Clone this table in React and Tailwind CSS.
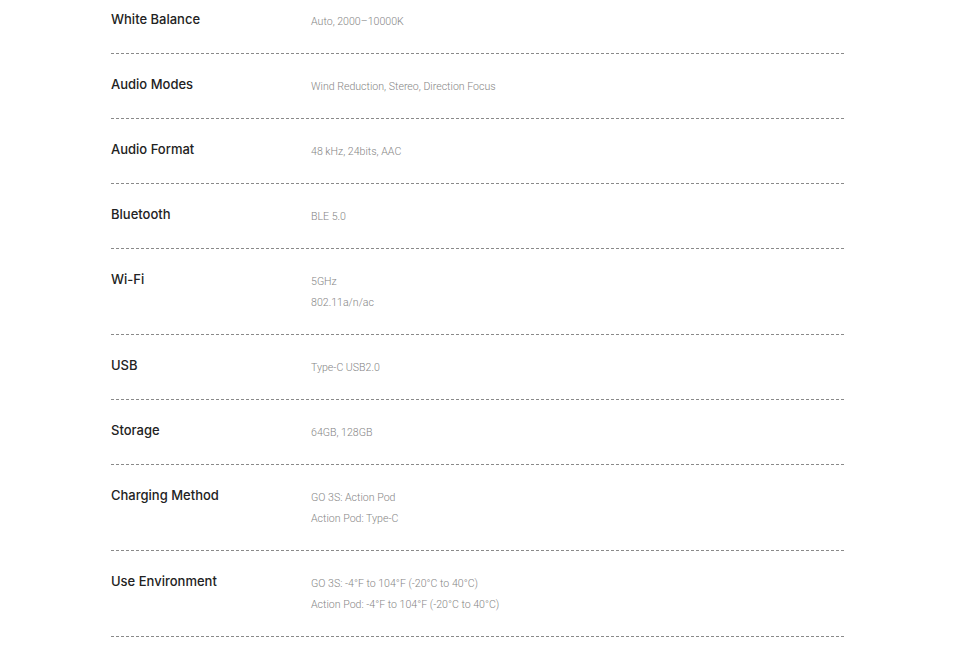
const specs = [
  { label: 'White Balance', values: ['Auto, 2000–10000K'] },
  { label: 'Audio Modes', values: ['Wind Reduction, Stereo, Direction Focus'] },
  { label: 'Audio Format', values: ['48 kHz, 24bits, AAC'] },
  { label: 'Bluetooth', values: ['BLE 5.0'] },
  { label: 'Wi-Fi', values: ['5GHz', '802.11a/n/ac'] },
  { label: 'USB', values: ['Type-C USB2.0'] },
  { label: 'Storage', values: ['64GB, 128GB'] },
  { label: 'Charging Method', values: ['GO 3S: Action Pod', 'Action Pod: Type-C'] },
  { label: 'Use Environment', values: ['GO 3S: -4°F to 104°F (-20°C to 40°C)', 'Action Pod: -4°F to 104°F (-20°C to 40°C)'] },
];

export default function App() {
  return (
    <div className="w-full h-[646px] overflow-hidden bg-white">
      {/* Spec table */}
      <div className="w-[733px] ml-[111px] -mt-[11px]">
        {specs.map((row) => (
          <div
            key={row.label}
            className="flex pt-5 pb-[21px] border-b border-dashed border-[#8a8a8a]"
          >
            <div className="w-[200px] shrink-0 text-[13px] leading-5 font-medium text-[#222] font-['Inter',sans-serif]">
              {row.label}
            </div>
            <div className="flex flex-col mt-[2px] text-[10.6px] leading-[21px] font-light text-[#858585] font-['Roboto',sans-serif]">
              {row.values.map((v) => (
                <span key={v}>{v}</span>
              ))}
            </div>
          </div>
        ))}
      </div>
    </div>
  );
}
